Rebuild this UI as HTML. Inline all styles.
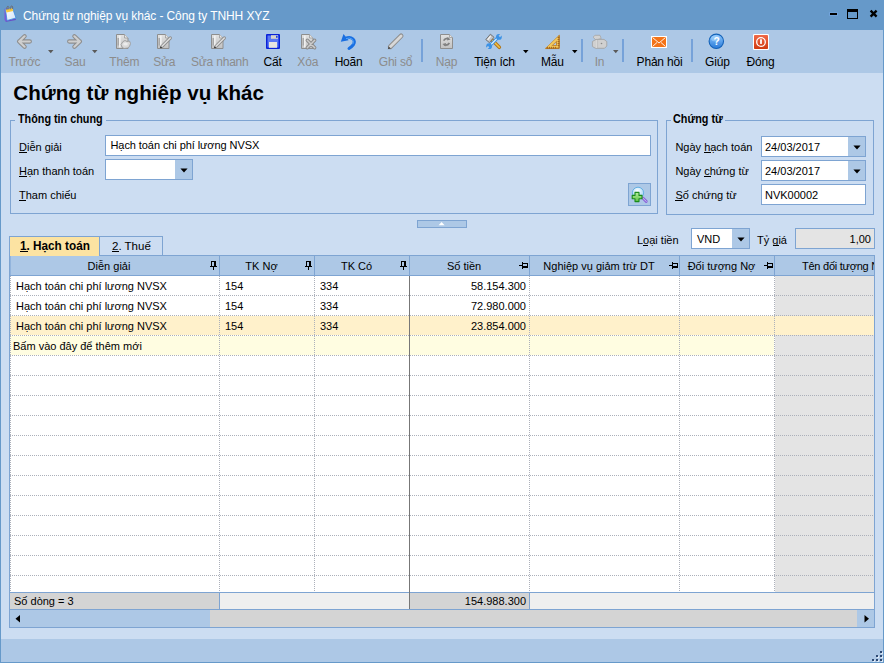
<!DOCTYPE html><html><head><meta charset="utf-8"><style>
html,body{margin:0;padding:0;width:884px;height:663px;overflow:hidden;background:#ccddf2;}
#root{position:relative;width:884px;height:663px;overflow:hidden;font-family:"Liberation Sans", sans-serif;}
.t{position:absolute;white-space:nowrap;line-height:1;}
.r{position:absolute;}
svg{position:absolute;}
</style></head><body><div id="root"><div class="r" style="left:0px;top:0px;width:884px;height:663px;background:#ccddf2;"></div>
<div class="r" style="left:0px;top:0px;width:884px;height:30px;background:#6699c9;"></div>
<div class="r" style="left:0px;top:30px;width:884px;height:43px;background:#adc8e6;"></div>
<div class="r" style="left:0px;top:639px;width:884px;height:24px;background:#adc8e6;"></div>
<div class="r" style="left:0px;top:30px;width:1px;height:633px;background:#6699c9;"></div>
<div class="r" style="left:883px;top:30px;width:1px;height:633px;background:#6699c9;"></div>
<div class="r" style="left:0px;top:662px;width:884px;height:1px;background:#6699c9;"></div>
<svg style="left:0;top:0" width="24" height="28" viewBox="0 0 24 28">
<defs><linearGradient id="cg" x1="0" y1="0" x2="1" y2="1"><stop offset="0" stop-color="#ffffff"/><stop offset="1" stop-color="#cfe2f8"/></linearGradient></defs>
<path d="M4.5 9 L8 8 L8 21 L6 21.5 L4.5 20 Z" fill="#7a5ad8"/>
<path d="M5 21 L15.5 18.5 L16 20 L6.5 21.8 Z" fill="#6a4ec8"/>
<path d="M5.5 9.5 L12.5 8 L16 18 L7 20.5 Z" fill="url(#cg)" stroke="#3a8ae0" stroke-width="0.8"/>
<path d="M5.6 9.6 L12.4 8.1 L13.3 11 L6.5 12.6 Z" fill="#f5c842"/>
<path d="M7 10 Q6.5 6 8.2 6.3 Q9.3 6.8 8.8 9.5 M10.8 9.4 Q10.3 5.6 12 5.9 Q13.1 6.3 12.6 9" fill="none" stroke="#6a6a70" stroke-width="0.9"/>
</svg>
<div class="t" style="left:23px;top:9.84px;font-size:12px;color:#fff;letter-spacing:-0.1px;">Chứng từ nghiệp vụ khác - Công ty TNHH XYZ</div>
<div class="r" style="left:829px;top:12px;width:9px;height:4px;background:#70a2da;"></div>
<div class="r" style="left:830px;top:13px;width:7px;height:2px;background:#000;"></div>
<div class="r" style="left:847px;top:9px;width:11px;height:10px;background:transparent;box-sizing:border-box;border:1px solid #000;"></div>
<div class="r" style="left:848px;top:10px;width:9px;height:2px;background:#000;"></div>
<svg style="left:868;top:8" width="12" height="12" viewBox="0 0 12 12"><path d="M2.6 2.6 L8.6 8.6 M8.6 2.6 L2.6 8.6" stroke="#000" stroke-width="2.3"/></svg>
<div class="t" style="left:-15.5px;width:80px;text-align:center;top:55.84px;font-size:12px;color:#8c8c8c;letter-spacing:-0.2px;">Trước</div>
<div class="t" style="left:35.0px;width:80px;text-align:center;top:55.84px;font-size:12px;color:#8c8c8c;letter-spacing:-0.2px;">Sau</div>
<div class="t" style="left:84.3px;width:80px;text-align:center;top:55.84px;font-size:12px;color:#8c8c8c;letter-spacing:-0.2px;">Thêm</div>
<div class="t" style="left:124.19999999999999px;width:80px;text-align:center;top:55.84px;font-size:12px;color:#8c8c8c;letter-spacing:-0.2px;">Sửa</div>
<div class="t" style="left:179.75px;width:80px;text-align:center;top:55.84px;font-size:12px;color:#8c8c8c;letter-spacing:-0.2px;">Sửa nhanh</div>
<div class="t" style="left:232.5px;width:80px;text-align:center;top:55.84px;font-size:12px;color:#000;letter-spacing:-0.2px;">Cất</div>
<div class="t" style="left:267.75px;width:80px;text-align:center;top:55.84px;font-size:12px;color:#8c8c8c;letter-spacing:-0.2px;">Xóa</div>
<div class="t" style="left:308.6px;width:80px;text-align:center;top:55.84px;font-size:12px;color:#000;letter-spacing:-0.2px;">Hoãn</div>
<div class="t" style="left:355.5px;width:80px;text-align:center;top:55.84px;font-size:12px;color:#8c8c8c;letter-spacing:-0.2px;">Ghi sổ</div>
<div class="t" style="left:406.5px;width:80px;text-align:center;top:55.84px;font-size:12px;color:#8c8c8c;letter-spacing:-0.2px;">Nạp</div>
<div class="t" style="left:454.5px;width:80px;text-align:center;top:55.84px;font-size:12px;color:#000;letter-spacing:-0.2px;">Tiện ích</div>
<div class="t" style="left:512.4px;width:80px;text-align:center;top:55.84px;font-size:12px;color:#000;letter-spacing:-0.2px;">Mẫu</div>
<div class="t" style="left:559.5px;width:80px;text-align:center;top:55.84px;font-size:12px;color:#8c8c8c;letter-spacing:-0.2px;">In</div>
<div class="t" style="left:619.5px;width:80px;text-align:center;top:55.84px;font-size:12px;color:#000;letter-spacing:-0.2px;">Phản hồi</div>
<div class="t" style="left:677.4px;width:80px;text-align:center;top:55.84px;font-size:12px;color:#000;letter-spacing:-0.2px;">Giúp</div>
<div class="t" style="left:720.5px;width:80px;text-align:center;top:55.84px;font-size:12px;color:#000;letter-spacing:-0.2px;">Đóng</div>
<div class="r" style="left:421px;top:39px;width:2px;height:23px;background:#76a2d9;"></div>
<div class="r" style="left:581px;top:39px;width:2px;height:23px;background:#76a2d9;"></div>
<div class="r" style="left:622px;top:39px;width:2px;height:23px;background:#76a2d9;"></div>
<div class="r" style="left:691px;top:39px;width:2px;height:23px;background:#76a2d9;"></div>
<svg style="left:48px;top:50px" width="6" height="4" viewBox="0 0 6 4"><path d="M0 0 H5.5 L2.75 3.2 Z" fill="#5a5a5a"/></svg>
<svg style="left:92px;top:50px" width="6" height="4" viewBox="0 0 6 4"><path d="M0 0 H5.5 L2.75 3.2 Z" fill="#5a5a5a"/></svg>
<svg style="left:523px;top:50px" width="6" height="4" viewBox="0 0 6 4"><path d="M0 0 H5.5 L2.75 3.2 Z" fill="#000"/></svg>
<svg style="left:572px;top:50px" width="6" height="4" viewBox="0 0 6 4"><path d="M0 0 H5.5 L2.75 3.2 Z" fill="#000"/></svg>
<svg style="left:613px;top:50px" width="6" height="4" viewBox="0 0 6 4"><path d="M0 0 H5.5 L2.75 3.2 Z" fill="#5a5a5a"/></svg>

<svg style="left:0;top:0" width="884" height="73" viewBox="0 0 884 73">
<defs>
<linearGradient id="gg" x1="0" y1="0" x2="0" y2="1"><stop offset="0" stop-color="#e2e2e2"/><stop offset="1" stop-color="#c2c2c2"/></linearGradient>
<linearGradient id="hb" x1="0" y1="0" x2="0" y2="1"><stop offset="0" stop-color="#8cc8ff"/><stop offset="1" stop-color="#2a7ad8"/></linearGradient>
<linearGradient id="rd" x1="0" y1="0" x2="0" y2="1"><stop offset="0" stop-color="#f06a48"/><stop offset="1" stop-color="#d03a10"/></linearGradient>
</defs>
<!-- back arrow -->
<g fill="none" stroke-linecap="round" stroke-linejoin="round">
<path d="M24.6 36.3 L19.1 41.5 L24.6 46.7 M19.1 41.5 H29.8" stroke="#8e8e8e" stroke-width="4.3"/>
<path d="M24.6 36.3 L19.1 41.5 L24.6 46.7 M19.1 41.5 H29.8" stroke="#cfcfcf" stroke-width="2.2"/>
<path d="M74.4 36.3 L79.9 41.5 L74.4 46.7 M79.9 41.5 H69.2" stroke="#8e8e8e" stroke-width="4.3"/>
<path d="M74.4 36.3 L79.9 41.5 L74.4 46.7 M79.9 41.5 H69.2" stroke="#cfcfcf" stroke-width="2.2"/>
</g>
<!-- Them: page + blob -->
<path d="M116.5 34.5 H124.5 L128.0 38 V48.5 H116.5 Z" fill="url(#gg)" stroke="#8e8e8e"/>
<path d="M124.5 34.5 V38 H128.0" fill="#e8e8e8" stroke="#9a9a9a" stroke-width="0.8"/>
<rect x="117.5" y="38" width="1.6" height="7.5" fill="#a8a8a8"/>
<rect x="119.1" y="35.5" width="1.5" height="12" fill="#f4f4f4"/>
<path d="M123 41.5 L125 40.5 L127 41.5 L129.5 41 L130.5 43.5 L129.5 46.5 L127.5 48 L124 48.5 L122 47 L121 44.5 Z" fill="#d8d8d8" stroke="#9c9c9c" stroke-width="0.9" stroke-linejoin="round"/>
<ellipse cx="125.5" cy="44" rx="2.3" ry="1.6" fill="#ececec"/>
<!-- Sua: page + pencil -->
<g id="sua">
<path d="M157.5 34.5 H165.5 L169.0 38 V48.5 H157.5 Z" fill="url(#gg)" stroke="#8e8e8e"/>
<path d="M165.5 34.5 V38 H169.0" fill="#e8e8e8" stroke="#9a9a9a" stroke-width="0.8"/>
<rect x="158.5" y="38" width="1.6" height="7.5" fill="#a8a8a8"/>
<rect x="160.1" y="35.5" width="1.5" height="12" fill="#f4f4f4"/>
<path d="M161.5 46.8 L170.3 38" stroke="#8e8e8e" stroke-width="3.2" stroke-linecap="round"/>
<path d="M161.5 46.8 L170.3 38" stroke="#dedede" stroke-width="1.5" stroke-linecap="round"/>
<circle cx="161" cy="47.3" r="0.9" fill="#303030"/>
</g>
<use href="#sua" x="54" y="0"/>
<!-- Cat: floppy -->
<rect x="266" y="34" width="14" height="15" rx="1" fill="#0a22d8"/>
<rect x="267.5" y="35.5" width="11" height="12" fill="#5a78f4"/>
<rect x="271" y="35.2" width="7" height="3.6" fill="#d8d4cc"/>
<rect x="276" y="35.8" width="1.6" height="2" fill="#1a40e8"/>
<rect x="269" y="42" width="8" height="5.8" fill="#e8e6e0"/>
<!-- Xoa: page + x -->
<path d="M301.5 34.5 H309.5 L313.0 38 V48.5 H301.5 Z" fill="url(#gg)" stroke="#8e8e8e"/>
<path d="M309.5 34.5 V38 H313.0" fill="#e8e8e8" stroke="#9a9a9a" stroke-width="0.8"/>
<rect x="302.5" y="38" width="1.6" height="7.5" fill="#a8a8a8"/>
<rect x="304.1" y="35.5" width="1.5" height="12" fill="#f4f4f4"/>
<path d="M307.3 40.3 L314.7 47.7 M314.7 40.3 L307.3 47.7" stroke="#8a8a8a" stroke-width="3.4" stroke-linecap="round"/>
<path d="M307.3 40.3 L314.7 47.7 M314.7 40.3 L307.3 47.7" stroke="#cccccc" stroke-width="1.5" stroke-linecap="round"/>
<!-- Hoan: undo -->
<path d="M343.5 34 L340.8 41.8 L348.6 40.2 Z" fill="#1a6ee0"/>
<path d="M345 38.6 Q350 36.5 352.8 38.8 Q355.5 41.5 353.5 44.5 Q351.8 46.8 349 48.5" fill="none" stroke="#1a70e2" stroke-width="3" stroke-linecap="round"/>
<path d="M346 38.6 Q350 37.2 352.2 39.2 Q354.4 41.6 352.8 44.2" fill="none" stroke="#5aa8f8" stroke-width="0.9"/>
<!-- Ghi so: pencil -->
<path d="M390.3 46.7 L401.1 35.9" stroke="#8e8e8e" stroke-width="4.8" stroke-linecap="round"/>
<path d="M390.3 46.7 L401.1 35.9" stroke="#d8d8d8" stroke-width="2.8" stroke-linecap="round"/>
<path d="M387.8 49.3 L388.6 46.2 L391 48.5 Z" fill="#505050"/>
<!-- Nap: page + refresh -->
<path d="M440.5 34.5 H449.5 L452.5 37.5 V48.5 H440.5 Z" fill="url(#gg)" stroke="#8e8e8e"/>
<path d="M449.5 34.5 V37.5 H452.5" fill="#e8e8e8" stroke="#9a9a9a" stroke-width="0.8"/>
<path d="M443.6 40.6 Q445.5 37.6 449 38.8 M449.4 43 Q447.5 46 444 44.8" fill="none" stroke="#808080" stroke-width="1.7"/>
<path d="M447.6 37 L450.6 39.6 L447 40.6 Z M445.4 46.6 L442.4 44 L446 43 Z" fill="#808080"/>
<!-- Tien ich: hammer + wrench -->
<path d="M492.3 40.3 L499.3 47.3" stroke="#b27618" stroke-width="3.6" stroke-linecap="round"/>
<path d="M492.3 40.3 L499.3 47.3" stroke="#f2c24a" stroke-width="1.5" stroke-linecap="round"/>
<path d="M485.8 39.6 L490.4 34.2 L494 37.3 L489.4 42.6 Z" fill="#c4c4c4" stroke="#686868" stroke-width="0.9" stroke-linejoin="round"/>
<path d="M487.6 39.8 L490.6 36.2" stroke="#f4f4f4" stroke-width="1.3"/>
<path d="M490.3 45.2 L497.6 37.9" stroke="#3b92e6" stroke-width="3.3" stroke-linecap="round"/>
<path d="M490.3 45.2 L497.6 37.9" stroke="#dcf2ff" stroke-width="1.3"/>
<circle cx="498.9" cy="36.9" r="2.9" fill="#3b92e6"/>
<circle cx="489.1" cy="46.2" r="2.9" fill="#3b92e6"/>
<path d="M499.3 36.5 L502 33.8 M488.7 46.6 L486 49.3" stroke="#adc8e6" stroke-width="2"/>
<!-- Mau: set square -->
<path d="M545.3 48.6 L559.4 35 V48.6 Z" fill="#f3c95c" stroke="#c48a30" stroke-width="0.7" stroke-linejoin="round"/>
<path d="M545.8 48.2 H559 V35.6" fill="none" stroke="#a86818" stroke-width="1"/>
<path d="M551.3 46 L557 46 V40.4 Z" fill="#c08a3a"/>
<path d="M553.4 45 L556 45 V42.4 Z" fill="#adc8e6"/>
<path d="M547.5 48.6 V46.8 M549.5 48.6 V46.8 M551.5 48.6 V46.8 M553.5 48.6 V46.8 M555.5 48.6 V46.8 M559.4 37.5 H557.6 M559.4 39.5 H557.6 M559.4 41.5 H557.6 M559.4 43.5 H557.6 M559.4 45.5 H557.6" stroke="#a06018" stroke-width="0.9"/>
<!-- In: printer -->
<path d="M593 37.2 L595 35.3 H600 L601.2 38.5 L596 40 Z" fill="#d2d2d2" stroke="#a6a6a6" stroke-width="0.8" stroke-linejoin="round"/>
<path d="M592.4 41.5 L596 39.4 H604 L606.8 41.6 V46 L604.5 48.3 H595.5 L592.4 46.5 Z" fill="#d0d0d0" stroke="#a4a4a4" stroke-width="0.9" stroke-linejoin="round"/>
<path d="M596.5 40 V48" stroke="#d8d8d8" stroke-width="1"/>
<path d="M597.6 40 V48" stroke="#b8b8b8" stroke-width="0.6"/>
<circle cx="601.5" cy="43.5" r="0.8" fill="#8a8a8a"/>
<!-- Phan hoi: envelope -->
<rect x="651" y="36" width="16" height="12" fill="#fff"/>
<rect x="652" y="37" width="14" height="10" fill="#f47318"/>
<path d="M652.5 37.5 L659 43 L665.5 37.5 M652.5 46.5 L657 42.5 M665.5 46.5 L661 42.5" fill="none" stroke="#fff" stroke-width="0.9"/>
<!-- Giup: help -->
<circle cx="716.3" cy="41.3" r="7.2" fill="url(#hb)" stroke="#1462b8" stroke-width="1.1"/>
<ellipse cx="715.5" cy="38.5" rx="4.5" ry="3" fill="#b8deff" opacity="0.45"/>
<text x="716.5" y="45.3" font-family="Liberation Sans" font-weight="700" font-size="10" fill="#fff" text-anchor="middle">?</text>
<!-- Dong: close -->
<rect x="753" y="34" width="16" height="16" rx="1.2" fill="#fff"/>
<rect x="754" y="35" width="14" height="14" rx="0.8" fill="url(#rd)"/>
<circle cx="761" cy="42" r="4.3" fill="none" stroke="#fff" stroke-width="1.3"/>
<rect x="760.1" y="39.3" width="1.8" height="4.6" fill="#fff"/>
</svg>

<div class="t" style="left:13.3px;top:82.56px;font-size:20.6px;color:#000;font-weight:700;">Chứng từ nghiệp vụ khác</div>
<div class="r" style="left:10px;top:120px;width:1px;height:94px;background:#7ea4d2;"></div>
<div class="r" style="left:657px;top:120px;width:1px;height:94px;background:#7ea4d2;"></div>
<div class="r" style="left:10px;top:213px;width:648px;height:1px;background:#7ea4d2;"></div>
<div class="r" style="left:10px;top:120px;width:5px;height:1px;background:#7ea4d2;"></div>
<div class="r" style="left:106px;top:120px;width:552px;height:1px;background:#7ea4d2;"></div>
<div class="t" style="left:17.6px;top:112.84px;font-size:12px;color:#000;font-weight:700;transform:scaleX(0.9);transform-origin:0 0;">Thông tin chung</div>
<div class="r" style="left:666px;top:120px;width:1px;height:95px;background:#7ea4d2;"></div>
<div class="r" style="left:873px;top:120px;width:1px;height:95px;background:#7ea4d2;"></div>
<div class="r" style="left:666px;top:214px;width:208px;height:1px;background:#7ea4d2;"></div>
<div class="r" style="left:666px;top:120px;width:5px;height:1px;background:#7ea4d2;"></div>
<div class="r" style="left:725px;top:120px;width:149px;height:1px;background:#7ea4d2;"></div>
<div class="t" style="left:673.3px;top:112.84px;font-size:12px;color:#000;font-weight:700;transform:scaleX(0.9);transform-origin:0 0;">Chứng từ</div>
<div class="t" style="left:19px;top:141.69px;font-size:11px;color:#000;">Diễn giải</div>
<div class="r" style="left:19px;top:152px;width:8px;height:1px;background:#000;"></div>
<div class="t" style="left:19px;top:165.69px;font-size:11px;color:#000;">Hạn thanh toán</div>
<div class="r" style="left:19px;top:176px;width:8px;height:1px;background:#000;"></div>
<div class="t" style="left:19px;top:189.69px;font-size:11px;color:#000;">Tham chiếu</div>
<div class="r" style="left:19px;top:200px;width:7px;height:1px;background:#000;"></div>
<div class="r" style="left:105px;top:135px;width:546px;height:21px;background:#fff;box-sizing:border-box;border:1px solid #7ea4d2;"></div>
<div class="t" style="left:110.5px;top:140.19px;font-size:11px;color:#000;letter-spacing:-0.08px;">Hạch toán chi phí lương NVSX</div>
<div class="r" style="left:105px;top:159px;width:88px;height:21px;background:#fff;box-sizing:border-box;border:1px solid #7ea4d2;"></div>
<div class="r" style="left:175px;top:160px;width:17px;height:19px;background:#adc8e6;"></div>
<svg style="left:179.5px;top:167.5px" width="8" height="6" viewBox="0 0 8 6"><path d="M0.4 0.5 H7.6 L4 4.6 Z" fill="#000"/></svg>
<div class="r" style="left:628px;top:183px;width:23px;height:23px;background:#adc8e6;box-sizing:border-box;border:1px solid #7ea4d2;"></div>
<svg style="left:628px;top:183px" width="23" height="23" viewBox="0 0 23 23">
<defs><radialGradient id="mg" cx="0.45" cy="0.35" r="0.7"><stop offset="0" stop-color="#ffffff"/><stop offset="1" stop-color="#9ad0f4"/></radialGradient>
<linearGradient id="pg" x1="0" y1="0" x2="0" y2="1"><stop offset="0" stop-color="#b8f0a0"/><stop offset="1" stop-color="#5cc040"/></linearGradient></defs>
<path d="M14.8 15 L18.2 18.4" stroke="#8a6ad8" stroke-width="3" stroke-linecap="round"/>
<path d="M14.8 15 L18.2 18.4" stroke="#c8b8f8" stroke-width="1" stroke-linecap="round"/>
<circle cx="10" cy="9.8" r="5.6" fill="url(#mg)" stroke="#5aaae0" stroke-width="0.9"/>
<path d="M7 9.4 H11 V12.4 H14 V15.8 H11 V18.6 H7 V15.8 H4.2 V12.4 H7 Z" fill="url(#pg)" stroke="#1a8a1a" stroke-width="1.1" stroke-linejoin="round"/>
</svg>
<div class="t" style="left:675.4px;top:141.69px;font-size:11px;color:#000;">Ngày hạch toán</div>
<div class="r" style="left:704px;top:152px;width:7px;height:1px;background:#000;"></div>
<div class="t" style="left:675.4px;top:165.69px;font-size:11px;color:#000;">Ngày chứng từ</div>
<div class="r" style="left:704px;top:176px;width:7px;height:1px;background:#000;"></div>
<div class="t" style="left:675.4px;top:189.69px;font-size:11px;color:#000;">Số chứng từ</div>
<div class="r" style="left:675px;top:200px;width:8px;height:1px;background:#000;"></div>
<div class="r" style="left:761px;top:136px;width:105px;height:21px;background:#fff;box-sizing:border-box;border:1px solid #7ea4d2;"></div>
<div class="r" style="left:848px;top:137px;width:17px;height:19px;background:#adc8e6;"></div>
<svg style="left:852.5px;top:144.5px" width="8" height="6" viewBox="0 0 8 6"><path d="M0.4 0.5 H7.6 L4 4.6 Z" fill="#000"/></svg>
<div class="r" style="left:761px;top:160px;width:105px;height:21px;background:#fff;box-sizing:border-box;border:1px solid #7ea4d2;"></div>
<div class="r" style="left:848px;top:161px;width:17px;height:19px;background:#adc8e6;"></div>
<svg style="left:852.5px;top:168.5px" width="8" height="6" viewBox="0 0 8 6"><path d="M0.4 0.5 H7.6 L4 4.6 Z" fill="#000"/></svg>
<div class="r" style="left:761px;top:184px;width:105px;height:21px;background:#fff;box-sizing:border-box;border:1px solid #7ea4d2;"></div>
<div class="t" style="left:765px;top:141.69px;font-size:11px;color:#000;">24/03/2017</div>
<div class="t" style="left:765px;top:165.69px;font-size:11px;color:#000;">24/03/2017</div>
<div class="t" style="left:765px;top:189.69px;font-size:11px;color:#000;">NVK00002</div>
<div class="r" style="left:417px;top:220px;width:50px;height:8px;background:#adc8e6;box-sizing:border-box;border:1px solid #7ea4d2;"></div>
<svg style="left:438px;top:221px" width="8" height="5" viewBox="0 0 8 5"><path d="M0.6 4.2 H6.6 L3.6 0.9 Z" fill="#fff"/></svg>
<div class="t" style="left:637px;top:234.69px;font-size:11px;color:#000;">Loại tiền</div>
<div class="r" style="left:643px;top:245px;width:5px;height:1px;background:#000;"></div>
<div class="r" style="left:691px;top:228px;width:59px;height:21px;background:#fff;box-sizing:border-box;border:1px solid #7ea4d2;"></div>
<div class="r" style="left:732px;top:229px;width:17px;height:19px;background:#adc8e6;"></div>
<svg style="left:736.5px;top:236.5px" width="8" height="6" viewBox="0 0 8 6"><path d="M0.4 0.5 H7.6 L4 4.6 Z" fill="#000"/></svg>
<div class="t" style="left:697px;top:233.69px;font-size:11px;color:#000;">VND</div>
<div class="t" style="left:757px;top:234.69px;font-size:11px;color:#000;">Tỷ giá</div>
<div class="r" style="left:773px;top:245px;width:6px;height:1px;background:#000;"></div>
<div class="r" style="left:795px;top:228px;width:80px;height:21px;background:#e4e4e4;box-sizing:border-box;border:1px solid #7ea4d2;"></div>
<div class="t" style="left:811px;width:60px;text-align:right;top:233.69px;font-size:11px;color:#000;">1,00</div>
<div class="r" style="left:9px;top:236px;width:91px;height:20px;background:#fce3a2;box-sizing:border-box;border:1px solid #7ea4d2;"></div>
<div class="r" style="left:99px;top:236px;width:64px;height:20px;background:#ccddf2;box-sizing:border-box;border:1px solid #7ea4d2;"></div>
<div class="t" style="left:20.2px;top:239.92px;font-size:12.5px;color:#000;font-weight:700;transform:scaleX(0.94);transform-origin:0 0;">1. Hạch toán</div>
<div class="r" style="left:20px;top:251px;width:8px;height:1px;background:#000;"></div>
<div class="t" style="left:112px;top:240.77px;font-size:11.5px;color:#000;">2. Thuế</div>
<div class="r" style="left:112px;top:251px;width:7px;height:1px;background:#000;"></div>
<div class="r" style="left:9px;top:255px;width:866px;height:338px;background:#fff;box-sizing:border-box;border:1px solid #7ea4d2;"></div>
<div class="r" style="left:10px;top:256px;width:864px;height:19px;background:#adc8e6;"></div>
<div class="r" style="left:9px;top:275px;width:866px;height:1px;background:#7ea4d2;"></div>
<div class="r" style="left:219px;top:256px;width:1px;height:19px;background:#7ea4d2;"></div>
<div class="r" style="left:314px;top:256px;width:1px;height:19px;background:#7ea4d2;"></div>
<div class="r" style="left:409px;top:256px;width:1px;height:19px;background:#7ea4d2;"></div>
<div class="r" style="left:529px;top:256px;width:1px;height:19px;background:#7ea4d2;"></div>
<div class="r" style="left:679px;top:256px;width:1px;height:19px;background:#7ea4d2;"></div>
<div class="r" style="left:774px;top:256px;width:1px;height:19px;background:#7ea4d2;"></div>
<div class="r" style="left:775px;top:276px;width:99px;height:316px;background:#e4e4e4;"></div>
<div class="r" style="left:10px;top:316px;width:864px;height:19px;background:#fff1cb;"></div>
<div class="r" style="left:10px;top:336px;width:764px;height:19px;background:#fffde1;"></div>
<div class="r" style="left:10px;top:295px;width:864px;height:1px;background:repeating-linear-gradient(90deg,#acb0ba 0 1px,transparent 1px 2px);"></div>
<div class="r" style="left:10px;top:315px;width:864px;height:1px;background:repeating-linear-gradient(90deg,#acb0ba 0 1px,transparent 1px 2px);"></div>
<div class="r" style="left:10px;top:335px;width:864px;height:1px;background:repeating-linear-gradient(90deg,#acb0ba 0 1px,transparent 1px 2px);"></div>
<div class="r" style="left:10px;top:355px;width:864px;height:1px;background:repeating-linear-gradient(90deg,#acb0ba 0 1px,transparent 1px 2px);"></div>
<div class="r" style="left:10px;top:375px;width:864px;height:1px;background:repeating-linear-gradient(90deg,#acb0ba 0 1px,transparent 1px 2px);"></div>
<div class="r" style="left:10px;top:395px;width:864px;height:1px;background:repeating-linear-gradient(90deg,#acb0ba 0 1px,transparent 1px 2px);"></div>
<div class="r" style="left:10px;top:415px;width:864px;height:1px;background:repeating-linear-gradient(90deg,#acb0ba 0 1px,transparent 1px 2px);"></div>
<div class="r" style="left:10px;top:435px;width:864px;height:1px;background:repeating-linear-gradient(90deg,#acb0ba 0 1px,transparent 1px 2px);"></div>
<div class="r" style="left:10px;top:455px;width:864px;height:1px;background:repeating-linear-gradient(90deg,#acb0ba 0 1px,transparent 1px 2px);"></div>
<div class="r" style="left:10px;top:475px;width:864px;height:1px;background:repeating-linear-gradient(90deg,#acb0ba 0 1px,transparent 1px 2px);"></div>
<div class="r" style="left:10px;top:495px;width:864px;height:1px;background:repeating-linear-gradient(90deg,#acb0ba 0 1px,transparent 1px 2px);"></div>
<div class="r" style="left:10px;top:515px;width:864px;height:1px;background:repeating-linear-gradient(90deg,#acb0ba 0 1px,transparent 1px 2px);"></div>
<div class="r" style="left:10px;top:535px;width:864px;height:1px;background:repeating-linear-gradient(90deg,#acb0ba 0 1px,transparent 1px 2px);"></div>
<div class="r" style="left:10px;top:555px;width:864px;height:1px;background:repeating-linear-gradient(90deg,#acb0ba 0 1px,transparent 1px 2px);"></div>
<div class="r" style="left:10px;top:575px;width:864px;height:1px;background:repeating-linear-gradient(90deg,#acb0ba 0 1px,transparent 1px 2px);"></div>
<div class="r" style="left:10px;top:276px;width:1px;height:316px;background:repeating-linear-gradient(180deg,#acb0ba 0 1px,transparent 1px 2px);"></div>
<div class="r" style="left:219px;top:276px;width:1px;height:316px;background:repeating-linear-gradient(180deg,#acb0ba 0 1px,transparent 1px 2px);"></div>
<div class="r" style="left:314px;top:276px;width:1px;height:316px;background:repeating-linear-gradient(180deg,#acb0ba 0 1px,transparent 1px 2px);"></div>
<div class="r" style="left:529px;top:276px;width:1px;height:316px;background:repeating-linear-gradient(180deg,#acb0ba 0 1px,transparent 1px 2px);"></div>
<div class="r" style="left:679px;top:276px;width:1px;height:316px;background:repeating-linear-gradient(180deg,#acb0ba 0 1px,transparent 1px 2px);"></div>
<div class="r" style="left:774px;top:276px;width:1px;height:316px;background:repeating-linear-gradient(180deg,#acb0ba 0 1px,transparent 1px 2px);"></div>
<div class="r" style="left:409px;top:276px;width:1px;height:316px;background:#777;"></div>
<div class="t" style="left:9.0px;width:200px;text-align:center;top:260.69px;font-size:11px;color:#000;">Diễn giải</div>
<div class="t" style="left:161.5px;width:200px;text-align:center;top:260.69px;font-size:11px;color:#000;">TK Nợ</div>
<div class="t" style="left:256.5px;width:200px;text-align:center;top:260.69px;font-size:11px;color:#000;">TK Có</div>
<div class="t" style="left:364.0px;width:200px;text-align:center;top:260.69px;font-size:11px;color:#000;">Số tiền</div>
<div class="t" style="left:499.0px;width:200px;text-align:center;top:260.69px;font-size:11px;color:#000;">Nghiệp vụ giảm trừ DT</div>
<div class="t" style="left:621.5px;width:200px;text-align:center;top:260.69px;font-size:11px;color:#000;">Đối tượng Nợ</div>
<div class="r" style="left:775px;top:256px;width:99px;height:19px;overflow:hidden">
<div class="t" style="left:27px;top:4.69px;font-size:11px;color:#000;letter-spacing:-0.25px;">Tên đối tượng Nợ</div>
</div>
<div class="r" style="left:874px;top:256px;width:1px;height:336px;background:#7ea4d2;"></div>
<div class="r" style="left:875px;top:255px;width:8px;height:21px;background:#ccddf2;"></div>
<div class="r" style="left:10px;top:255px;width:89px;height:1px;background:#fce3a2;"></div>
<div class="r" style="left:10px;top:256px;width:1px;height:19px;background:#92b4dc;"></div>
<div class="r" style="left:211px;top:261px;width:5px;height:1px;background:#000;"></div>
<div class="r" style="left:211px;top:262px;width:1px;height:4px;background:#000;"></div>
<div class="r" style="left:214px;top:262px;width:2px;height:4px;background:#000;"></div>
<div class="r" style="left:210px;top:266px;width:7px;height:1px;background:#000;"></div>
<div class="r" style="left:213px;top:267px;width:1px;height:3px;background:#000;"></div>
<div class="r" style="left:306px;top:261px;width:5px;height:1px;background:#000;"></div>
<div class="r" style="left:306px;top:262px;width:1px;height:4px;background:#000;"></div>
<div class="r" style="left:309px;top:262px;width:2px;height:4px;background:#000;"></div>
<div class="r" style="left:305px;top:266px;width:7px;height:1px;background:#000;"></div>
<div class="r" style="left:308px;top:267px;width:1px;height:3px;background:#000;"></div>
<div class="r" style="left:401px;top:261px;width:5px;height:1px;background:#000;"></div>
<div class="r" style="left:401px;top:262px;width:1px;height:4px;background:#000;"></div>
<div class="r" style="left:404px;top:262px;width:2px;height:4px;background:#000;"></div>
<div class="r" style="left:400px;top:266px;width:7px;height:1px;background:#000;"></div>
<div class="r" style="left:403px;top:267px;width:1px;height:3px;background:#000;"></div>
<div class="r" style="left:519px;top:265px;width:3px;height:1px;background:#000;"></div>
<div class="r" style="left:522px;top:262px;width:1px;height:7px;background:#000;"></div>
<div class="r" style="left:523px;top:263px;width:5px;height:1px;background:#000;"></div>
<div class="r" style="left:527px;top:263px;width:1px;height:5px;background:#000;"></div>
<div class="r" style="left:523px;top:266px;width:5px;height:2px;background:#000;"></div>
<div class="r" style="left:669px;top:265px;width:3px;height:1px;background:#000;"></div>
<div class="r" style="left:672px;top:262px;width:1px;height:7px;background:#000;"></div>
<div class="r" style="left:673px;top:263px;width:5px;height:1px;background:#000;"></div>
<div class="r" style="left:677px;top:263px;width:1px;height:5px;background:#000;"></div>
<div class="r" style="left:673px;top:266px;width:5px;height:2px;background:#000;"></div>
<div class="r" style="left:764px;top:265px;width:3px;height:1px;background:#000;"></div>
<div class="r" style="left:767px;top:262px;width:1px;height:7px;background:#000;"></div>
<div class="r" style="left:768px;top:263px;width:5px;height:1px;background:#000;"></div>
<div class="r" style="left:772px;top:263px;width:1px;height:5px;background:#000;"></div>
<div class="r" style="left:768px;top:266px;width:5px;height:2px;background:#000;"></div>
<div class="t" style="left:16px;top:280.69px;font-size:11px;color:#000;">Hạch toán chi phí lương NVSX</div>
<div class="t" style="left:225px;top:280.69px;font-size:11px;color:#000;">154</div>
<div class="t" style="left:320px;top:280.69px;font-size:11px;color:#000;">334</div>
<div class="t" style="left:16px;top:300.69px;font-size:11px;color:#000;">Hạch toán chi phí lương NVSX</div>
<div class="t" style="left:225px;top:300.69px;font-size:11px;color:#000;">154</div>
<div class="t" style="left:320px;top:300.69px;font-size:11px;color:#000;">334</div>
<div class="t" style="left:16px;top:320.69px;font-size:11px;color:#000;">Hạch toán chi phí lương NVSX</div>
<div class="t" style="left:225px;top:320.69px;font-size:11px;color:#000;">154</div>
<div class="t" style="left:320px;top:320.69px;font-size:11px;color:#000;">334</div>
<div class="t" style="left:426px;width:100px;text-align:right;top:280.69px;font-size:11px;color:#000;">58.154.300</div>
<div class="t" style="left:426px;width:100px;text-align:right;top:300.69px;font-size:11px;color:#000;">72.980.000</div>
<div class="t" style="left:426px;width:100px;text-align:right;top:320.69px;font-size:11px;color:#000;">23.854.000</div>
<div class="t" style="left:13px;top:340.69px;font-size:11px;color:#000;">Bấm vào đây để thêm mới</div>
<div class="r" style="left:9px;top:592px;width:866px;height:18px;background:#efefef;box-sizing:border-box;border:1px solid #7ea4d2;"></div>
<div class="r" style="left:10px;top:593px;width:209px;height:16px;background:#d4d4d4;"></div>
<div class="r" style="left:219px;top:593px;width:1px;height:16px;background:#7ea4d2;"></div>
<div class="r" style="left:410px;top:593px;width:119px;height:16px;background:#d4d4d4;"></div>
<div class="r" style="left:409px;top:592px;width:1px;height:17px;background:#777;"></div>
<div class="r" style="left:529px;top:593px;width:1px;height:16px;background:#7ea4d2;"></div>
<div class="t" style="left:14px;top:595.69px;font-size:11px;color:#000;">Số dòng = 3</div>
<div class="t" style="left:426px;width:100px;text-align:right;top:595.69px;font-size:11px;color:#000;">154.988.300</div>
<div class="r" style="left:9px;top:609px;width:866px;height:19px;background:#d4d4d4;box-sizing:border-box;border:1px solid #7ea4d2;"></div>
<div class="r" style="left:10px;top:610px;width:200px;height:17px;background:#adc8e6;"></div>
<div class="r" style="left:857px;top:610px;width:17px;height:17px;background:#adc8e6;"></div>
<svg style="left:15px;top:615px" width="6" height="8" viewBox="0 0 6 8"><path d="M5 0 V7.5 L0.5 3.75 Z" fill="#000"/></svg>
<svg style="left:864px;top:615px" width="6" height="8" viewBox="0 0 6 8"><path d="M0.5 0 V7.5 L5 3.75 Z" fill="#000"/></svg>
<div class="r" style="left:881px;top:652px;width:2px;height:2px;background:#dce8f6;"></div>
<div class="r" style="left:880px;top:651px;width:2px;height:2px;background:#2e4a74;"></div>
<div class="r" style="left:877px;top:656px;width:2px;height:2px;background:#dce8f6;"></div>
<div class="r" style="left:876px;top:655px;width:2px;height:2px;background:#2e4a74;"></div>
<div class="r" style="left:881px;top:656px;width:2px;height:2px;background:#dce8f6;"></div>
<div class="r" style="left:880px;top:655px;width:2px;height:2px;background:#2e4a74;"></div>
<div class="r" style="left:873px;top:660px;width:2px;height:2px;background:#dce8f6;"></div>
<div class="r" style="left:872px;top:659px;width:2px;height:2px;background:#2e4a74;"></div>
<div class="r" style="left:877px;top:660px;width:2px;height:2px;background:#dce8f6;"></div>
<div class="r" style="left:876px;top:659px;width:2px;height:2px;background:#2e4a74;"></div>
<div class="r" style="left:881px;top:660px;width:2px;height:2px;background:#dce8f6;"></div>
<div class="r" style="left:880px;top:659px;width:2px;height:2px;background:#2e4a74;"></div>
</div></body></html>
